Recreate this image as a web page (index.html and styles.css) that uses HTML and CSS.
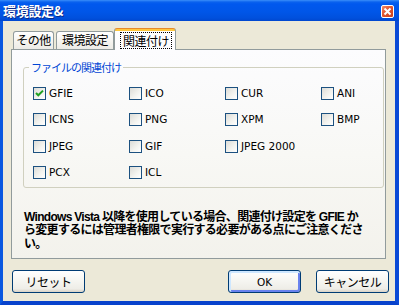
FILE: index.html
```html
<!DOCTYPE html>
<html lang="ja">
<head>
<meta charset="utf-8">
<title>環境設定</title>
<link rel="stylesheet" href="styles.css">
</head>
<body>
<div class="window">
  <div class="titlebar">
    <span class="title">環境設定&amp;</span>
    <span class="close"><svg width="11" height="11" viewBox="0 0 11 11"><path d="M2.5 2.5 L8.5 8.5 M8.5 2.5 L2.5 8.5" stroke="#fff" stroke-width="2" fill="none"/></svg></span>
  </div>
  <div class="frame">
    <div class="tabs">
      <div class="tab t1">その他</div>
      <div class="tab t2">環境設定</div>
      <div class="tab active"><span class="focus">関連付け</span></div>
    </div>
    <div class="panel">
      <fieldset class="group">
        <legend>ファイルの関連付け</legend>
        <div class="grid">
          <label class="check"><span class="box"><svg width="11" height="11" viewBox="0 0 11 11"><path d="M2 5 L4.3 7.3 L9 2.6" stroke="#21A121" stroke-width="2" fill="none"/></svg></span>GFIE</label>
          <label class="check"><span class="box"></span>ICO</label>
          <label class="check"><span class="box"></span>CUR</label>
          <label class="check"><span class="box"></span>ANI</label>
          <label class="check"><span class="box"></span>ICNS</label>
          <label class="check"><span class="box"></span>PNG</label>
          <label class="check"><span class="box"></span>XPM</label>
          <label class="check"><span class="box"></span>BMP</label>
          <label class="check"><span class="box"></span>JPEG</label>
          <label class="check"><span class="box"></span>GIF</label>
          <label class="check"><span class="box"></span>JPEG 2000</label>
          <div></div>
          <label class="check"><span class="box"></span>PCX</label>
          <label class="check"><span class="box"></span>ICL</label>
        </div>
      </fieldset>
      <p class="note">Windows Vista 以降を使用している場合、関連付け設定を GFIE か<br>ら変更するには管理者権限で実行する必要がある点にご注意くださ<br>い。</p>
    </div>
    <div class="buttons">
      <button class="btn">リセット</button>
      <button class="btn ok">OK</button>
      <button class="btn cancel">キャンセル</button>
    </div>
  </div>
</div>
</body>
</html>
```
FILE: styles.css
```css
* { box-sizing: border-box; }
html, body { margin: 0; padding: 0; }
body {
  width: 399px;
  height: 305px;
  overflow: hidden;
  background: #ECE9D8;
  font-family: "Noto Sans CJK JP", sans-serif;
  color: #000;
}
.window {
  width: 399px;
  height: 305px;
  display: flex;
  flex-direction: column;
  background: #ECE9D8;
  overflow: hidden;
}
.titlebar {
  height: 21px;
  flex: none;
  display: flex;
  align-items: center;
  justify-content: space-between;
  padding: 1px 5px 0 3px;
  background: linear-gradient(180deg, #3A8EF9 0px, #0A62EE 2px, #0058EE 4px, #0056E8 12px, #0050DD 18px, #0047CF 21px);
}
.title {
  color: #fff;
  font-weight: bold;
  font-size: 13px;
  line-height: 16px;
  letter-spacing: -0.3px;
  text-shadow: 1px 1px 0 #0A2A8A;
}
.close {
  width: 13px;
  height: 13px;
  border: 1px solid #fff;
  border-radius: 2px;
  background: linear-gradient(135deg, #F08A68 0%, #E0552F 45%, #C8401E 100%);
  display: flex;
  align-items: center;
  justify-content: center;
}
.close svg { display: block; }
.frame {
  flex: 1;
  min-height: 0;
  display: flex;
  flex-direction: column;
  border-left: 3px solid #0A58E0;
  border-right: 4px solid #0A4AD6;
  border-bottom: 4px solid #0842CC;
  padding: 7px 0 0 8px;
}
.tabs {
  display: flex;
  height: 22px;
  margin: 0 0 -1px 2px;
  position: relative;
  z-index: 1;
}
.tab {
  height: 18px;
  margin-top: 3px;
  border: 1px solid #919B9C;
  border-bottom: none;
  border-radius: 3px 3px 0 0;
  background: linear-gradient(180deg, #FFFFFF 0%, #F6F5F1 50%, #ECEBE6 100%);
  font-size: 12px;
  line-height: 16px;
  letter-spacing: -0.5px;
  text-align: center;
}
.t1 { width: 41px; margin-right: 2px; }
.t2 { width: 58px; }
.tab.active {
  width: 62px;
  height: 22px;
  margin-top: 0;
  border-top: 1px solid #E68B2C;
  background: linear-gradient(180deg, #FFC83C 0, #FFC83C 2px, #FFFFFF 2px, #FCFCFE 100%);
  padding: 3px 0 0 5px;
  text-align: left;
}
.focus {
  display: inline-block;
  border: 1px dotted #000;
  padding: 0 2px;
  line-height: 15px;
}
.panel {
  width: 375px;
  height: 210px;
  flex: none;
  border: 1px solid #919B9C;
  background: linear-gradient(180deg, #FCFCFE 0%, #F8F8F5 50%, #F3F2EC 100%);
  padding: 10px 2px 0 11px;
}
.group {
  width: 361px;
  min-width: 0;
  margin: 0;
  padding: 13px 9px 8px 9px;
  border: 1px solid #D0D0BF;
  border-radius: 3px;
}
.group legend {
  margin-left: -4px;
  padding: 0 2px;
  font-size: 11px;
  line-height: 14px;
  letter-spacing: -1px;
  color: #0046D5;
}
.grid {
  display: grid;
  grid-template-columns: 96px 96px 96px 1fr;
  grid-auto-rows: 13px;
  row-gap: 13.33px;
}
.check {
  display: flex;
  align-items: center;
  gap: 3px;
  font-family: "DejaVu Sans", sans-serif;
  font-size: 10.5px;
  line-height: 13px;
  color: #000;
  white-space: nowrap;
}
.box {
  width: 13px;
  height: 13px;
  flex: none;
  border: 1px solid #1C5180;
  background: linear-gradient(135deg, #DCDCD7 0%, #F4F4F0 60%, #FFFFFF 100%);
  display: flex;
  align-items: center;
  justify-content: center;
}
.box svg { display: block; }
.note {
  margin: 23px 0 0 1px;
  font-family: "Liberation Sans", "Noto Sans CJK JP", sans-serif;
  font-weight: bold;
  font-size: 12px;
  line-height: 13.3px;
  letter-spacing: -0.7px;
  white-space: nowrap;
}
.buttons {
  display: flex;
  margin: 11px 6px 0 1px;
}
.btn {
  width: 73px;
  height: 23px;
  padding: 0;
  border: 1px solid #003C74;
  border-radius: 3px;
  background: linear-gradient(180deg, #FFFFFF 0%, #F7F7F3 40%, #EEEDE7 85%, #D8D2C6 100%);
  font-family: "Noto Sans CJK JP", sans-serif;
  font-size: 12px;
  line-height: 16px;
  letter-spacing: -0.5px;
  color: #000;
}
.ok {
  margin-left: auto;
  font-family: "DejaVu Sans", sans-serif;
  font-size: 10.5px;
  letter-spacing: 0;
  box-shadow: inset 1px 1px 0 1px #CEE7FF, inset -1px -1px 0 1px #6982EE;
}
.cancel { margin-left: 15px; }
```
